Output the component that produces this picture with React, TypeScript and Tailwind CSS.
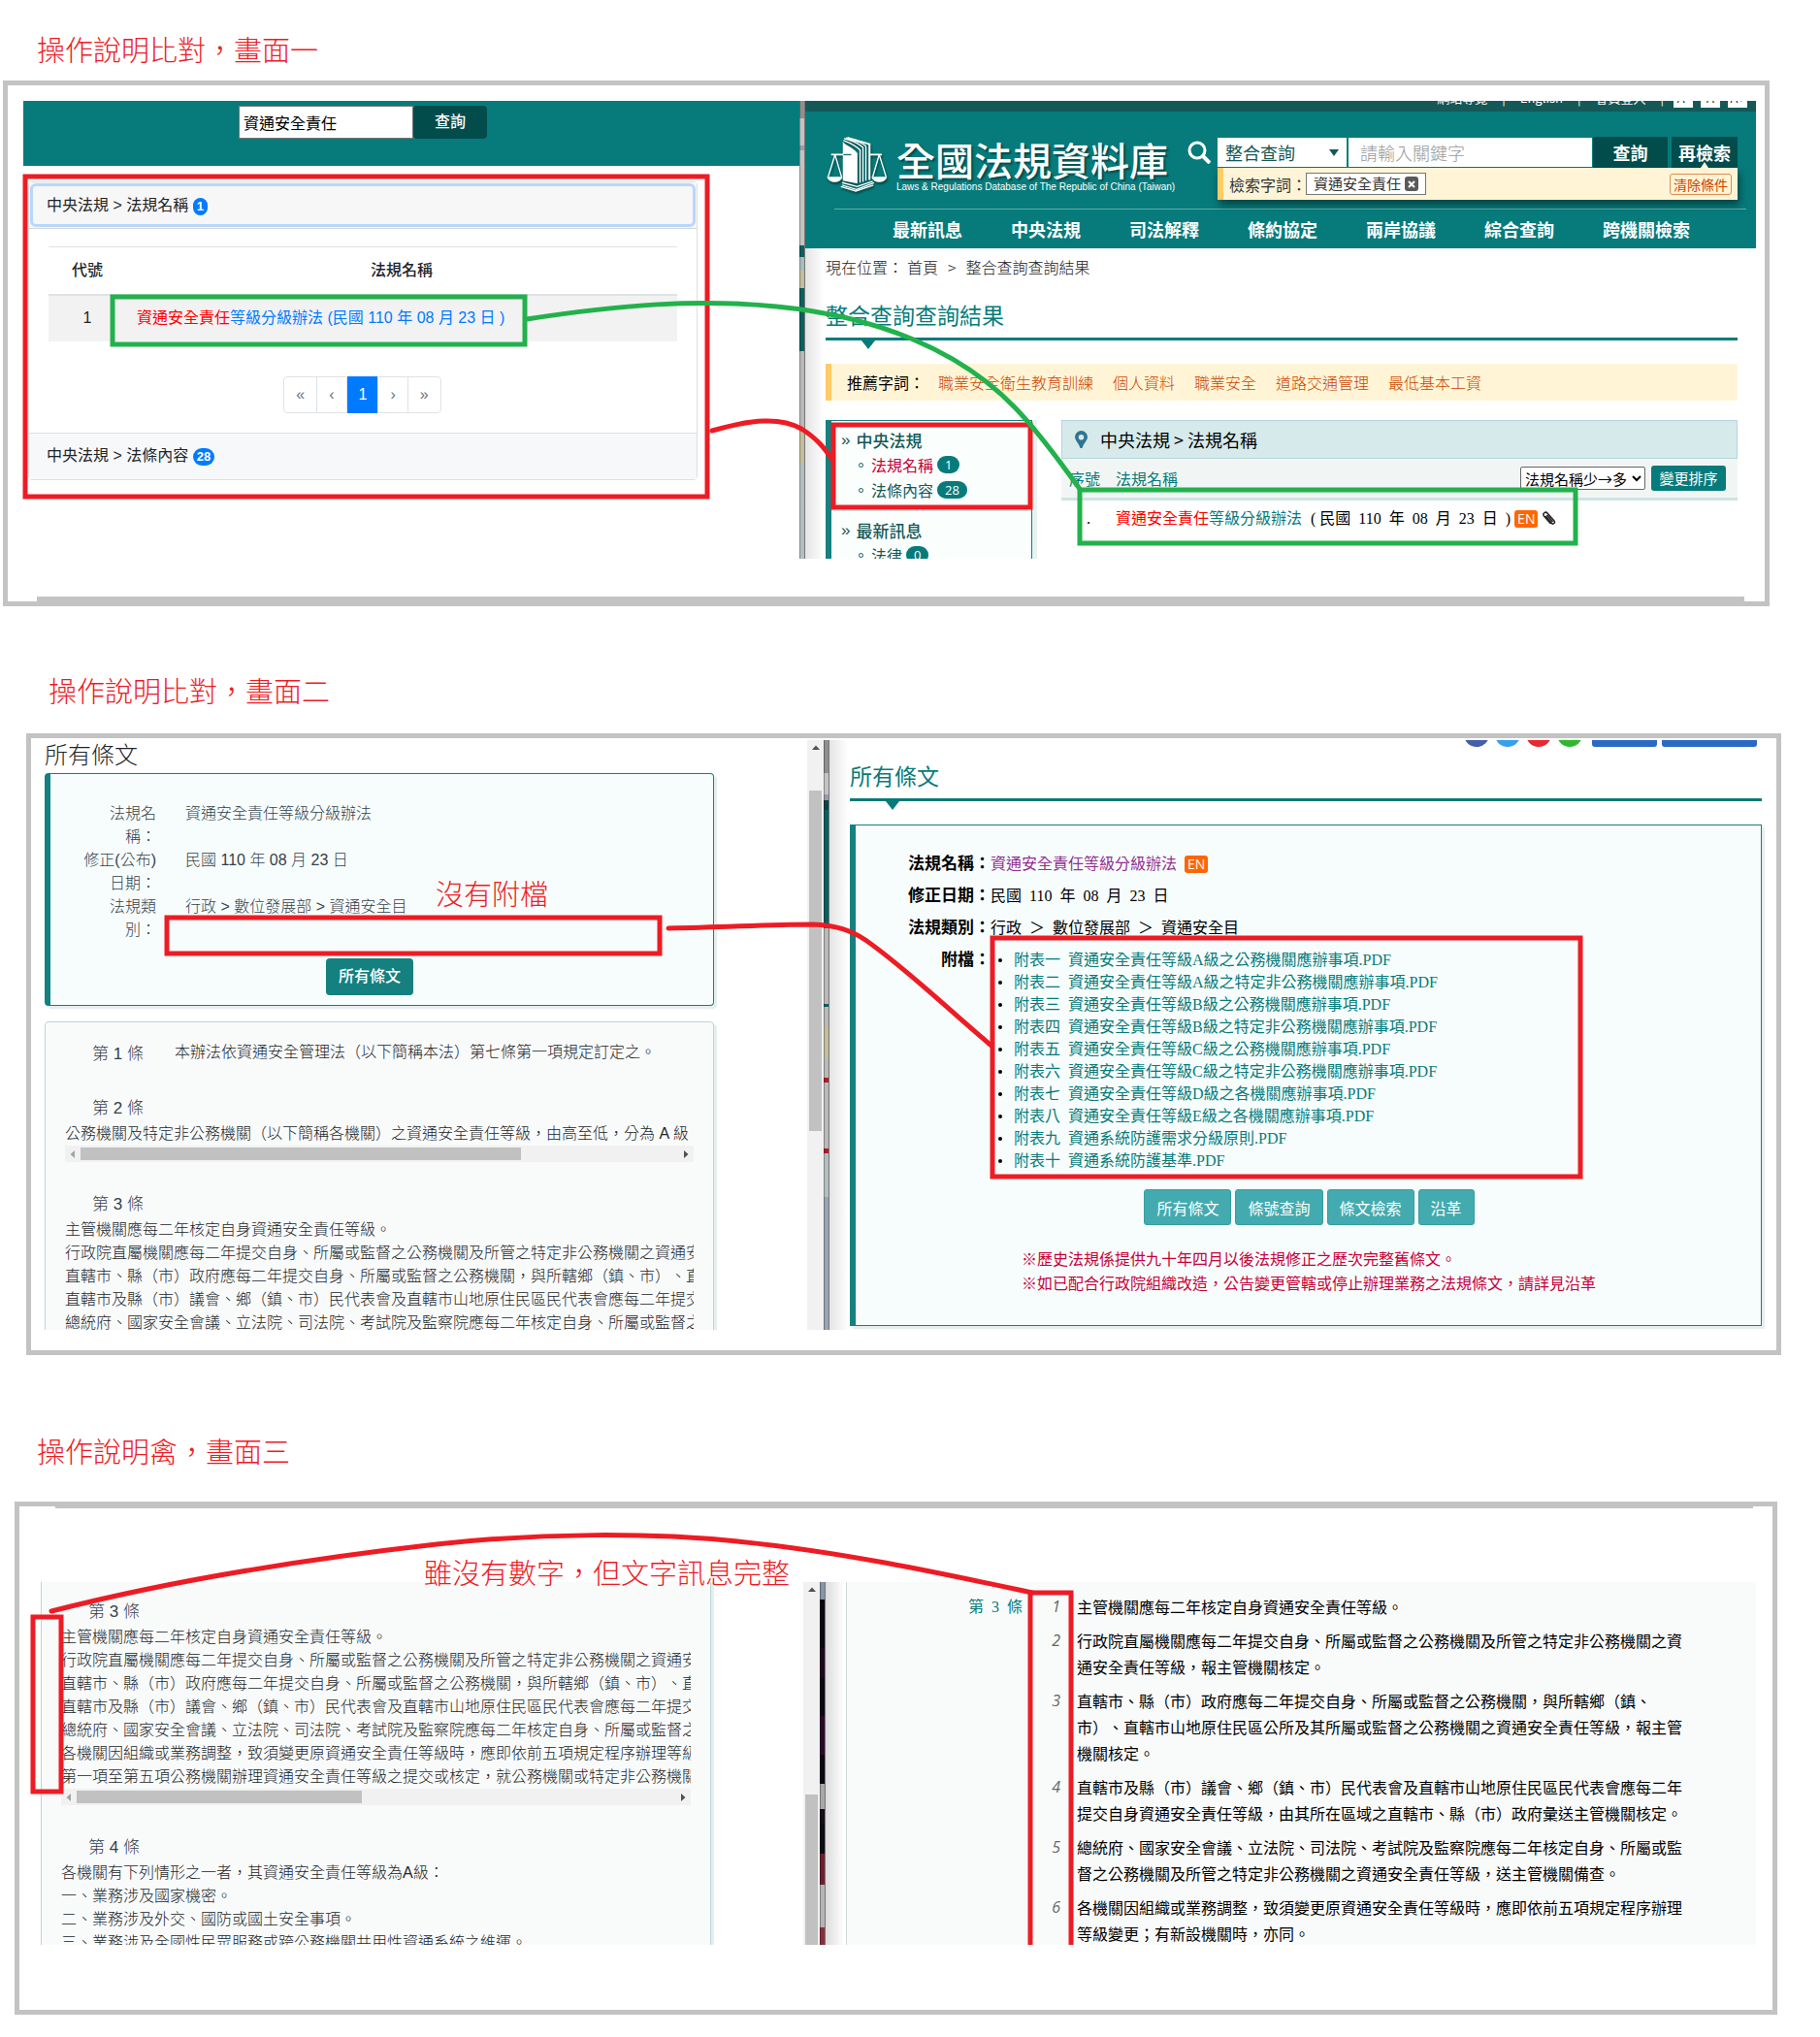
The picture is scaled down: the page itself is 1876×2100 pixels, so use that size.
import React from "react";

const SANS = "font-['Liberation_Sans','Noto_Sans_CJK_TC',sans-serif]";
const CJK = "font-['Noto_Sans_CJK_TC',sans-serif]";
const MING = "font-['Liberation_Serif','Noto_Sans_CJK_TC',serif]";
const RED = "#ed1c24";
const GREEN = "#22b14c";

function Note({ className, children }: { className: string; children: React.ReactNode }) {
  return (
    <span className={`absolute z-20 whitespace-nowrap text-[29px] leading-9 font-light text-[#ed1c24] ${className}`}>
      {children}
    </span>
  );
}

function Title({ className, children }: { className: string; children: React.ReactNode }) {
  return <h2 className={`text-[29px] leading-9 font-light text-[#ed1c24] ${className}`}>{children}</h2>;
}

/* Hand-drawn boxes and connectors laid over one section; top is the section's own start. */
function Ink({ top, children }: { top: number; children: React.ReactNode }) {
  return (
    <svg className="pointer-events-none absolute inset-0 z-10 h-full w-full" fill="none" aria-hidden="true">
      <g transform={`translate(0 ${-top})`}>{children}</g>
    </svg>
  );
}

function Box({ x, y, r, b, c }: { x: number; y: number; r: number; b: number; c: string }) {
  return <rect x={x + 2} y={y + 2} width={r - x - 4} height={b - y - 4} stroke={c} strokeWidth="5" />;
}

/* Sliver of the windows lying behind, seen between both panes. */
function Sliver({ parts }: { parts: [number, string][] }) {
  return (
    <div className="flex w-[6px] shrink-0 flex-col border-r border-[#777] bg-[#bdbdbd]" aria-hidden="true">
      {parts.map(([h, c], i) => (
        <div key={i} className="w-full shrink-0 border-l border-black/30" style={{ height: h, background: c }} />
      ))}
    </div>
  );
}

function VScroll({ before, thumb }: { before: string; thumb: string }) {
  return (
    <div className="flex w-[17px] shrink-0 flex-col items-center bg-[#f1f1f1]" aria-hidden="true">
      <svg className="mt-1 h-2 w-2 shrink-0" viewBox="0 0 8 8">
        <path d="M0 6 4 1.500 8 6z" fill="#505050" />
      </svg>
      <div className={`w-[13px] shrink-0 bg-[#c1c1c1] ${before} ${thumb}`} />
    </div>
  );
}

function HScroll({ thumb }: { thumb: string }) {
  return (
    <div className="flex h-[17px] items-center bg-[#f1f1f1]" aria-hidden="true">
      <svg className="mx-1 h-2 w-2 shrink-0" viewBox="0 0 8 8">
        <path d="M6 0 1.500 4 6 8z" fill="#a3a3a3" />
      </svg>
      <div className={`h-[13px] bg-[#c1c1c1] ${thumb}`} />
      <svg className="mr-1 ml-auto h-2 w-2 shrink-0" viewBox="0 0 8 8">
        <path d="M2 0 6.500 4 2 8z" fill="#505050" />
      </svg>
    </div>
  );
}

function Logo() {
  return (
    <svg
      className="h-[57px] w-[63px] shrink-0 drop-shadow-[1px_2px_1px_rgba(0,40,40,0.7)]"
      viewBox="36 123 188 170"
      fill="none"
      stroke="#fff"
      aria-hidden="true"
    >
      <path d="M50 178H90M168 178H206" strokeWidth="5" />
      <path d="M62 178 41 246M62 178 82 246M198 178 178 246M198 178 219 246" strokeWidth="4" />
      <path d="M37 246H85C80 268 43 268 37 246zM174 246H222C217 268 180 268 174 246z" fill="#fff" stroke="none" />
      <path d="M86 138C96 152 116 154 131 174V267L86 258z" fill="#fff" stroke="none" />
      <path d="M88 178H112" stroke="#067474" strokeWidth="4" />
      <path d="M88 134C104 140 122 146 139 164V264M90 128C112 136 132 140 148 156V262M96 126C118 134 142 138 157 152V258" strokeWidth="4" />
      <path d="M100 126C126 134 150 140 168 146V256" strokeWidth="6" />
      <path d="M84 264 130 276 178 260M84 272 128 285 182 264" strokeWidth="4" />
      <path d="M80 276 126 290 180 272" strokeWidth="4" />
    </svg>
  );
}

function HeadRule() {
  return (
    <div className="h-[3px] bg-[#077b7b]">
      <svg className="ml-[37px] block h-[12px] w-[14px]" viewBox="0 0 14 12" aria-hidden="true">
        <path d="M0 3H14L7 12z" fill="#077b7b" />
      </svg>
    </div>
  );
}

function En() {
  return (
    <span className="inline-block rounded-[3px] bg-[#ff6600] px-[3px] text-[14px] leading-[18px] font-medium text-white font-['Open_Sans',sans-serif]">
      EN
    </span>
  );
}

function Count({ n, teal }: { n: number; teal?: boolean }) {
  return (
    <span
      className={`inline-block rounded-full text-center text-white ${
        teal
          ? "ml-1 bg-[#077b7b] px-2 text-[13px] leading-[18px] font-['Open_Sans',sans-serif]"
          : "bg-[#007bff] px-1 text-[13px] leading-[18px] font-bold"
      }`}
    >
      {n}
    </span>
  );
}

function SearchPane() {
  return (
    <div className={`w-[800px] shrink-0 bg-white text-[16px] text-[#212529] ${SANS}`}>
      <form className="flex h-[67px] bg-[#077b7b] pt-[5px] pl-[222px]" onSubmit={(e) => e.preventDefault()}>
        <input
          aria-label="查詢字詞"
          defaultValue="資通安全責任"
          className="h-[34px] w-[180px] border border-[#767676] bg-white px-1 text-black"
        />
        <button className="h-[34px] w-[76px] rounded bg-[#034c4c] font-medium text-white">查詢</button>
      </form>
      <div className="mt-4 ml-[5px] w-[690px] rounded border border-[#dfdfdf]">
        <div className="border-b border-[#d5d5d5] bg-[#f7f7f7] p-px">
          <button className="h-[45px] w-full rounded-md border-[3px] border-[#b8d7fb] pl-[14px] text-left">
            中央法規 &gt; 法規名稱 <Count n={1} />
          </button>
        </div>
        <div className="px-5 pt-[18px]">
          <table className="w-full border-collapse text-center">
            <thead>
              <tr className="border-t border-b-2 border-[#dee2e6]">
                <th className="h-[49px] w-20 font-medium">代號</th>
                <th className="font-medium">法規名稱</th>
              </tr>
            </thead>
            <tbody>
              <tr className="h-12 bg-[#f2f2f2]">
                <td>1</td>
                <td className="pl-[11px] text-left">
                  <a href="#law" className="text-[#007bff]">
                    <span className="text-[#ff0000]">資通安全責任</span>等級分級辦法 (民國 110 年 08 月 23 日 )
                  </a>
                </td>
              </tr>
            </tbody>
          </table>
          <nav className="mt-9 mb-5 flex justify-center" aria-label="分頁">
            {["«", "‹", "1", "›", "»"].map((p) => (
              <button
                key={p}
                className={
                  p === "1"
                    ? "h-[38px] bg-[#007bff] px-3 text-white"
                    : "-ml-px h-[38px] border border-[#dee2e6] px-3 text-[#6c757d] first:rounded-l last:rounded-r"
                }
              >
                {p}
              </button>
            ))}
          </nav>
        </div>
        <button className="block h-12 w-full border-t border-[#dfdfdf] bg-[#f7f8fa] pl-[18px] text-left">
          中央法規 &gt; 法條內容 <Count n={28} />
        </button>
      </div>
    </div>
  );
}

function PortalHeader() {
  return (
    <header className="bg-[#077b7b] text-white">
      <div className="flex h-[11px] items-end justify-end overflow-hidden bg-[#145858] pr-[9px] pb-1 text-[13px] leading-5">
        <a href="#map">網站導覽</a>
        <span className="px-[15px]">|</span>
        <a href="#en">English</a>
        <span className="px-[15px]">|</span>
        <a href="#login">會員登入</a>
        <span className="pr-2.5 pl-[15px]">|</span>
        <div className="flex gap-2 text-center text-[#333]">
          <button className="w-5 bg-white">A-</button>
          <button className="w-5 bg-white">A</button>
          <button className="w-5 bg-white">A+</button>
        </div>
      </div>
      <div className="flex h-[100px] pt-[26px] pr-[19px] pl-[22px]">
        <Logo />
        <div className="ml-[9px] w-[280px] shrink-0">
          <div className="text-[40px] leading-[46px] font-medium whitespace-nowrap text-shadow-[2px_2px_2px_rgba(0,40,40,0.6)]">
            全國法規資料庫
          </div>
          <div className="text-[10px] leading-3 whitespace-nowrap font-['Liberation_Sans',sans-serif]">
            Laws &amp; Regulations Database of The Republic of China (Taiwan)
          </div>
        </div>
        <svg className="mt-1 ml-5 h-6 w-6 shrink-0" viewBox="0 0 24 24" fill="none" stroke="#fff" strokeWidth="3">
          <circle cx="10" cy="10" r="8" />
          <path d="m16 16 7 7" strokeWidth="4" />
        </svg>
        <div className="ml-[7px] grow">
          <form className="flex h-8" onSubmit={(e) => e.preventDefault()}>
            <div className="relative mt-px h-[30px]">
              <select
                aria-label="查詢類別"
                className="h-full w-[133px] appearance-none bg-white pl-2 text-[18px] text-[#145858]"
              >
                <option>整合查詢</option>
              </select>
              <svg className="absolute top-3 right-2 h-[7px] w-[10px]" viewBox="0 0 10 7" aria-hidden="true">
                <path d="M0 0H10L5 7z" fill="#145858" />
              </svg>
            </div>
            <input
              aria-label="關鍵字"
              placeholder="請輸入關鍵字"
              className="mt-px ml-0.5 h-[30px] min-w-0 grow bg-white pl-3 text-[18px] font-light placeholder:text-[#999]"
            />
            <button className="ml-px w-[77px] bg-[#034c4c] text-[18px] font-bold">查詢</button>
            <div className="relative ml-1 w-[68px]">
              <button className="h-full w-full bg-[#034c4c] text-[18px] font-bold">再檢索</button>
              <svg className="absolute bottom-0 left-[30px] h-[6px] w-2" viewBox="0 0 8 6" aria-hidden="true">
                <path d="M0 6 4 0 8 6z" fill="#fff5d6" />
              </svg>
            </div>
          </form>
          <div className="flex h-[33px] items-center border-l-6 border-[#ffcb66] bg-[#fff5d6] pr-1.5 pl-1.5 text-[16px] text-[#333] shadow-[2px_5px_8px_rgba(0,30,30,0.6)]">
            <span>檢索字詞：</span>
            <span className="-ml-px flex h-[23px] items-center gap-1 border border-[#777] bg-white px-[7px] text-[15px]">
              資通安全責任
              <button aria-label="移除" className="flex h-[15px] w-[14px] items-center justify-center rounded-[3px] bg-[#5a5a5a]">
                <svg className="h-2 w-2" viewBox="0 0 8 8" stroke="#fff" strokeWidth="2">
                  <path d="m1 1 6 6M7 1 1 7" />
                </svg>
              </button>
            </span>
            <button className="ml-auto h-[22px] w-16 rounded-[3px] border border-[#e08a50] text-[14px] leading-5 text-[#cc4400]">
              清除條件
            </button>
          </div>
        </div>
      </div>
      <nav className="mr-[10px] ml-[30px] flex h-[41px] items-center gap-[50px] border-t border-[#5fb0aa] pl-[60px] text-[18px] font-bold whitespace-nowrap">
        {["最新訊息", "中央法規", "司法解釋", "條約協定", "兩岸協議", "綜合查詢", "跨機關檢索"].map((t) => (
          <a key={t} href="#nav">
            {t}
          </a>
        ))}
      </nav>
    </header>
  );
}

function SideGroup({ name, items }: { name: string; items: [string, number, boolean][] }) {
  return (
    <div>
      <div className="flex h-[25px] items-center text-[17px] font-medium text-[#145858]">
        <span className="mr-1.5 font-['Liberation_Sans',sans-serif]">»</span>
        {name}
      </div>
      <ul className="pl-[18px]">
        {items.map(([t, n, on]) => (
          <li key={t} className="flex h-[26px] items-center text-[16px]">
            <span className="mr-2 inline-block h-[5px] w-[5px] rounded-full border border-[#145858]" />
            <a href="#group" className={on ? "text-[#c7003a]" : "text-[#145858]"}>
              {t}
            </a>
            <Count n={n} teal />
          </li>
        ))}
      </ul>
    </div>
  );
}

function PortalPane() {
  return (
    <div className={`min-w-0 grow bg-white text-[16px] ${CJK}`}>
      <PortalHeader />
      <div className="bg-linear-to-r from-[#e4e4e4] via-white via-[2%] to-white pr-[19px] pl-[21px]">
        <div className="flex h-[38px] items-center gap-2.5 font-light text-[#222]">
          <span>現在位置：</span>
          <a href="#home" className="-ml-1.5">
            首頁
          </a>
          <span>&gt;</span>
          <span>整合查詢查詢結果</span>
        </div>
        <h3 className="flex h-[54px] items-center pt-1.5 text-[23px] text-[#077b7b]">整合查詢查詢結果</h3>
        <HeadRule />
        <div className="mt-6 flex h-[38px] items-center gap-5 border-l-6 border-[#ffcb66] bg-[#fff5d6] pl-4 font-light text-[#cc4400]">
          <span className="-mr-1.5 font-normal text-black">推薦字詞：</span>
          {["職業安全衛生教育訓練", "個人資料", "職業安全", "道路交通管理", "最低基本工資"].map((t) => (
            <a key={t} href="#word">
              {t}
            </a>
          ))}
        </div>
        <div className="mt-5 flex items-start">
          <aside className="mr-[30px] w-[213px] shrink-0 border-t border-r border-l-6 border-[#148080] bg-[#fafefd] shadow-[5px_0_0_#e8f2f1]">
            <div className="border-b border-[#cfe5e2] pt-[7px] pb-2 pl-[10px]">
              <SideGroup name="中央法規" items={[["法規名稱", 1, true], ["法條內容", 28, false]]} />
            </div>
            <div className="pt-[7px] pb-4 pl-[10px]">
              <SideGroup name="最新訊息" items={[["法律", 0, false]]} />
            </div>
          </aside>
          <div className="min-w-0 grow">
            <div className="flex h-10 items-center gap-[13px] border border-[#b5d6d8] bg-[#d6eaeb] pl-[13px] font-medium text-black">
              <svg className="h-[18px] w-[13px]" viewBox="0 0 13 18" aria-hidden="true">
                <path
                  fillRule="evenodd"
                  d="M6.500 0A6.500 6.500 0 0 1 13 6.500C13 10 9 13 7.500 18H5.500C4 13 0 10 0 6.500A6.500 6.500 0 0 1 6.500 0zM6.500 4a2.800 2.800 0 1 0 0 5.600A2.800 2.800 0 0 0 6.500 4z"
                  fill="#2f7591"
                />
              </svg>
              <span className="text-[18px] font-normal">中央法規 &gt; 法規名稱</span>
            </div>
            <div className="flex h-[43px] items-center border-b-3 border-[#cce5e2] bg-[#f1f6f5] pr-[12px] pl-2 text-[#077b7b]">
              <span>序號</span>
              <span className="ml-4">法規名稱</span>
              <select
                aria-label="排序方式"
                className="mr-1.5 ml-auto h-6 w-[129px] rounded-[2px] border border-[#666] bg-white text-[15px] leading-5 text-black"
              >
                <option>法規名稱少→多</option>
              </select>
              <button className="h-[26px] w-[77px] rounded-[3px] bg-[#077b7b] text-[15px] font-normal text-white">變更排序</button>
            </div>
            <div className={`flex h-[38px] items-center pl-[26px] text-black ${MING}`}>
              <span className="mr-[26px]">.</span>
              <a href="#law" className="text-[#077b7b]">
                <span className="text-[#ff0000]">資通安全責任</span>等級分級辦法
              </a>
              <span className="mr-1 ml-[9px] whitespace-pre">{"( 民國  110  年  08  月  23  日  )"}</span>
              <En />
              <svg className="ml-1 h-4 w-[15px]" viewBox="0 0 15 16" fill="none" stroke="#222" strokeWidth="1.500" aria-label="附檔">
                <path d="m4 5 6.500 7.500c1.500 1.500 4-.5 2.500-2.500L6 2C4-.2.500 2.500 2.500 5l7 8M5.500 4l6 7" />
              </svg>
            </div>
          </div>
        </div>
      </div>
    </div>
  );
}

const ARTICLE3 = [
  "主管機關應每二年核定自身資通安全責任等級。",
  "行政院直屬機關應每二年提交自身、所屬或監督之公務機關及所管之特定非公務機關之資通安全責任等級，報主管機關核定。",
  "直轄市、縣（市）政府應每二年提交自身、所屬或監督之公務機關，與所轄鄉（鎮、市）、直轄市山地原住民區公所及其所屬或監督之公務機關之資通安全責任等級，報主管機關核定。",
  "直轄市及縣（市）議會、鄉（鎮、市）民代表會及直轄市山地原住民區民代表會應每二年提交自身資通安全責任等級，由其所在區域之直轄市、縣（市）政府彙送主管機關核定。",
  "總統府、國家安全會議、立法院、司法院、考試院及監察院應每二年核定自身、所屬或監督之公務機關及所管之特定非公務機關之資通安全責任等級，送主管機關備查。",
  "各機關因組織或業務調整，致須變更原資通安全責任等級時，應即依前五項規定程序辦理等級變更；有新設機關時，亦同。",
];

function Lines({ rows }: { rows: string[] }) {
  return (
    <div className="overflow-hidden leading-6 whitespace-nowrap">
      {rows.map((r) => (
        <p key={r}>{r}</p>
      ))}
    </div>
  );
}

function LawPane() {
  const fields: [string, string][] = [
    ["法規名稱：", "資通安全責任等級分級辦法"],
    ["修正(公布)日期：", "民國 110 年 08 月 23 日"],
    ["法規類別：", "行政 > 數位發展部 > 資通安全目"],
  ];
  return (
    <div className={`w-[800px] shrink-0 bg-white pl-[14px] text-[16px] font-light text-[#212529] ${SANS}`}>
      <h3 className="h-[34px] text-[24px] leading-8">所有條文</h3>
      <div className="w-[690px] rounded border border-l-6 border-[#148080] bg-[#f7fdfc] pt-[29px] pb-[10px] shadow-[3px_3px_0_#e6eeee]">
        <dl className="grid grid-cols-[109px_1fr] gap-x-[30px] leading-6 text-[#33414c]">
          {fields.map(([k, v]) => (
            <React.Fragment key={k}>
              <dt className="w-[77px] justify-self-end text-right">{k}</dt>
              <dd>{v}</dd>
            </React.Fragment>
          ))}
        </dl>
        <button className="mt-[17px] ml-[284px] h-[38px] w-[90px] rounded bg-[#158080] font-medium text-white">所有條文</button>
      </div>
      <div className="mt-4 w-[690px] rounded border border-[#b9d6d9] bg-[#f9fbfb] px-5 pt-[19px] shadow-[3px_3px_0_#e6eeee]">
        <div className="flex h-12">
          <h4 className="w-[113px] pl-7 text-[17px] leading-7 text-[#33414c]">第 1 條</h4>
          <p className="leading-6">本辦法依資通安全管理法（以下簡稱本法）第七條第一項規定訂定之。</p>
        </div>
        <h4 className="mt-2 pl-7 text-[17px] leading-7 text-[#33414c]">第 2 條</h4>
        <Lines rows={["公務機關及特定非公務機關（以下簡稱各機關）之資通安全責任等級，由高至低，分為 A 級"]} />
        <HScroll thumb="w-[454px]" />
        <h4 className="mt-[30px] pl-7 text-[17px] leading-7 text-[#33414c]">第 3 條</h4>
        <Lines rows={ARTICLE3} />
      </div>
    </div>
  );
}

const FILES = [
  "附表一  資通安全責任等級A級之公務機關應辦事項.PDF",
  "附表二  資通安全責任等級A級之特定非公務機關應辦事項.PDF",
  "附表三  資通安全責任等級B級之公務機關應辦事項.PDF",
  "附表四  資通安全責任等級B級之特定非公務機關應辦事項.PDF",
  "附表五  資通安全責任等級C級之公務機關應辦事項.PDF",
  "附表六  資通安全責任等級C級之特定非公務機關應辦事項.PDF",
  "附表七  資通安全責任等級D級之各機關應辦事項.PDF",
  "附表八  資通安全責任等級E級之各機關應辦事項.PDF",
  "附表九  資通系統防護需求分級原則.PDF",
  "附表十  資通系統防護基準.PDF",
];

function PortalLawPane() {
  return (
    <div className={`min-w-0 grow bg-linear-to-r from-[#e4e4e4] via-white via-[2%] to-white pr-[3px] pl-[21px] text-[16px] ${CJK}`}>
      <div className="flex h-[7px] items-end justify-end gap-[5px] overflow-hidden pr-[5px]">
        <div className="mr-[5px] flex gap-[6px]">
          <a href="#fb" aria-label="Facebook" className="block h-[26px] w-[26px] rounded-full bg-[#4460a8]" />
          <a href="#tw" aria-label="Twitter" className="block h-[26px] w-[26px] rounded-full bg-[#35a0ee]" />
          <a href="#plus" aria-label="Plurk" className="block h-[26px] w-[26px] rounded-full bg-[#e62a32]" />
          <a href="#line" aria-label="Line" className="block h-[26px] w-[26px] rounded-full bg-[#2fb82f]" />
        </div>
        <a href="#share" aria-label="分享" className="h-6 w-[67px] rounded-b-[3px] bg-[#2a6ac4]" />
        <a href="#print" aria-label="友善列印" className="h-6 w-[98px] rounded-b-[3px] bg-[#2a6ac4]" />
      </div>
      <h3 className="flex h-[53px] items-center pt-1.5 text-[23px] text-[#077b7b]">所有條文</h3>
      <HeadRule />
      <div className="mt-6 border border-l-6 border-[#148080] bg-[#f7fdfc] pt-7 pb-[31px] shadow-[3px_3px_0_#e6eeee]">
        <dl className={`grid grid-cols-[139px_1fr] gap-y-[9px] leading-6 text-black ${MING}`}>
          <dt className="text-right text-[17px] font-bold">法規名稱：</dt>
          <dd className="flex items-center gap-2">
            <a href="#law" className="text-[#933093]">
              資通安全責任等級分級辦法
            </a>
            <En />
          </dd>
          <dt className="text-right text-[17px] font-bold">修正日期：</dt>
          <dd className="whitespace-pre">{"民國  110  年  08  月  23  日"}</dd>
          <dt className="text-right text-[17px] font-bold">法規類別：</dt>
          <dd className="whitespace-pre">{"行政  ＞  數位發展部  ＞  資通安全目"}</dd>
          <dt className="text-right text-[17px] font-bold">附檔：</dt>
          <dd>
            <ul className="leading-[23px]">
              {FILES.map((f) => (
                <li key={f} className="flex items-center whitespace-pre">
                  <span className="mr-3 ml-2 h-1 w-1 rounded-full bg-black" />
                  <a href="#file" className="text-[#077b7b]">
                    {f}
                  </a>
                </li>
              ))}
            </ul>
          </dd>
        </dl>
        <div className="mt-[18px] flex justify-center gap-1 pl-0.5 text-white">
          {["所有條文", "條號查詢", "條文檢索", "沿革"].map((t) => (
            <button key={t} className="h-[37px] rounded-[3px] border border-[#359f9f] bg-[#43abaf] px-3">
              {t}
            </button>
          ))}
        </div>
        <div className="mt-[22px] pl-[171px] leading-[25px] text-[#c7003a]">
          <p>※歷史法規係提供九十年四月以後法規修正之歷次完整舊條文。</p>
          <p>※如已配合行政院組織改造，公告變更管轄或停止辦理業務之法規條文，請詳見沿革</p>
        </div>
      </div>
    </div>
  );
}

function ArticlePane() {
  return (
    <div className={`w-[786px] shrink-0 bg-white text-[16px] font-light text-[#212529] ${SANS}`}>
      <div className="w-[691px] border-x border-[#b9d6d9] bg-[#f9fbfb] px-5 pt-[17px] shadow-[3px_0_0_#e6eeee]">
        <h4 className="pl-7 text-[17px] leading-7 text-[#33414c]">第 3 條</h4>
        <Lines rows={[...ARTICLE3, "第一項至第五項公務機關辦理資通安全責任等級之提交或核定，就公務機關或特定非公務機關內之單位"]} />
        <HScroll thumb="w-[294px]" />
        <h4 className="mt-[30px] pl-7 text-[17px] leading-7 text-[#33414c]">第 4 條</h4>
        <Lines
          rows={[
            "各機關有下列情形之一者，其資通安全責任等級為A級：",
            "一、業務涉及國家機密。",
            "二、業務涉及外交、國防或國土安全事項。",
            "三、業務涉及全國性民眾服務或跨公務機關共用性資通系統之維運。",
          ]}
        />
      </div>
    </div>
  );
}

function PortalArticlePane() {
  return (
    <div className={`min-w-0 grow bg-linear-to-r from-[#dcdcdc] via-white via-[2%] to-white pl-[21px] text-[16px] ${CJK}`}>
      <div className="flex border-l border-[#cfd8d8] bg-[#f9fbfb] pt-3 pr-[76px] leading-[27px]">
        <h4 className={`w-[188px] shrink-0 pl-[125px] whitespace-pre text-[#077b7b] ${MING}`}>{"第  3  條"}</h4>
        <ol className="flex min-w-0 grow flex-col gap-2 text-black">
          {ARTICLE3.map((t, i) => (
            <li key={t} className="flex">
              <span className="w-[49px] shrink-0 pr-[17px] text-right text-[#666] italic font-['Open_Sans',sans-serif]">{i + 1}</span>
              <p className="min-w-0 grow">{t}</p>
            </li>
          ))}
        </ol>
      </div>
    </div>
  );
}

export default function App() {
  return (
    <main lang="zh-TW" className={`min-w-[1800px] bg-white pb-6 [text-spacing-trim:space-all] ${CJK}`}>
      <section className="relative">
        <Title className="pt-8 pb-[15px] pl-[38px]">操作說明比對，畫面一</Title>
        <div className="mr-[52px] ml-[3px] border-5 border-[#c3c3c3] pt-4">
          <div className="mr-[9px] ml-4 flex h-[472px] overflow-hidden">
            <SearchPane />
            <Sliver
              parts={[[18, "#8f8f8f"], [28, "#c3c3c3"], [5, "#9a9ab0"], [98, "#c3c3c3"], [12, "#0a5f60"], [14, "#a9bcbc"], [18, "#c3bd9b"], [65, "#0a5f60"], [78, "#b9b9b9"], [38, "#c3bd9b"], [98, "#b3bfbf"]]}
            />
            <PortalPane />
          </div>
          <div className="mr-[21px] ml-[30px] mt-[39px] h-[5px] bg-[#c3c3c3]" />
        </div>
        <Ink top={0}>
          <Box x={24} y={180} r={731} b={514} c={RED} />
          <Box x={114} y={304} r={543} b={357} c={GREEN} />
          <Box x={857} y={436} r={1064} b={525} c={RED} />
          <Box x={1111} y={503} r={1626} b={562} c={GREEN} />
          <path d="M543 329C640 314 720 308 800 316C905 326 990 362 1046 420C1075 450 1095 480 1113 504" stroke={GREEN} strokeWidth="5" />
          <path d="M734 444C775 432 805 430 826 442C842 452 850 462 858 474" stroke={RED} strokeWidth="5" strokeLinecap="round" />
        </Ink>
      </section>

      <section className="relative">
        <Title className="pt-[68px] pb-[27px] pl-[50px]">操作說明比對，畫面二</Title>
        <div className="mr-10 ml-[27px] border-5 border-[#c3c3c3] pt-0.5 pb-[21px]">
          <div className="mr-[12px] flex h-[608px] overflow-hidden">
            <LawPane />
            <VScroll before="mt-10" thumb="h-[351px]" />
            <Sliver
              parts={[[34, "#8f8f8f"], [22, "#c3c3c3"], [6, "#9a9ab0"], [10, "#0a4344"], [122, "#0a5f60"], [78, "#b9b9b9"], [3, "#0a5f60"], [20, "#b9b9b9"], [33, "#c3bd9b"], [20, "#b9b9b9"], [5, "#b01c24"], [68, "#b9b9b9"], [5, "#b01c24"], [45, "#b3bfbf"], [137, "#9aa3b3"]]}
            />
            <PortalLawPane />
          </div>
        </div>
        <Note className="top-[277px] left-[449px]">沒有附檔</Note>
        <Ink top={624}>
          <Box x={170} y={943} r={682} b={984} c={RED} />
          <Box x={1021} y={964} r={1631} b={1214} c={RED} />
          <path d="M689 956C750 955 790 952 838 952C862 953 877 958 892 968C935 998 980 1042 1022 1077" stroke={RED} strokeWidth="5" strokeLinecap="round" />
        </Ink>
      </section>

      <section className="relative">
        <Title className="pt-20 pb-[35px] pl-[38px]">操作說明禽，畫面三</Title>
        <div className="mr-11 ml-[15px] border-5 border-[#c3c3c3] pb-[67px]">
          <div className="mr-5 ml-[37px] h-0.5 bg-[#c3c3c3]" />
          <div className="mt-[76px] mr-[17px] ml-[22px] flex h-[374px] overflow-hidden">
            <ArticlePane />
            <VScroll before="mt-[207px]" thumb="h-[155px]" />
            <Sliver
              parts={[[18, "#8793a8"], [50, "#0a0712"], [30, "#20061e"], [40, "#0a0712"], [40, "#2a0828"], [30, "#0a0712"], [26, "#a8a8a8"], [16, "#1a0a1c"], [30, "#0c0a14"], [32, "#6b1f30"], [44, "#b5b5b5"], [18, "#8a2f3c"]]}
            />
            <PortalArticlePane />
          </div>
        </div>
        <Note className="top-[205px] left-[437px]">雖沒有數字，但文字訊息完整</Note>
        <Ink top={1396}>
          <Box x={32} y={1664} r={65} b={1848} c={RED} />
          <path d="M1062 2004V1641H1104V2004" stroke={RED} strokeWidth="5" />
          <path d="M53 1660C170 1630 300 1608 450 1591C560 1579 670 1579 760 1588C870 1599 975 1622 1064 1641" stroke={RED} strokeWidth="5" strokeLinecap="round" />
        </Ink>
      </section>
    </main>
  );
}
